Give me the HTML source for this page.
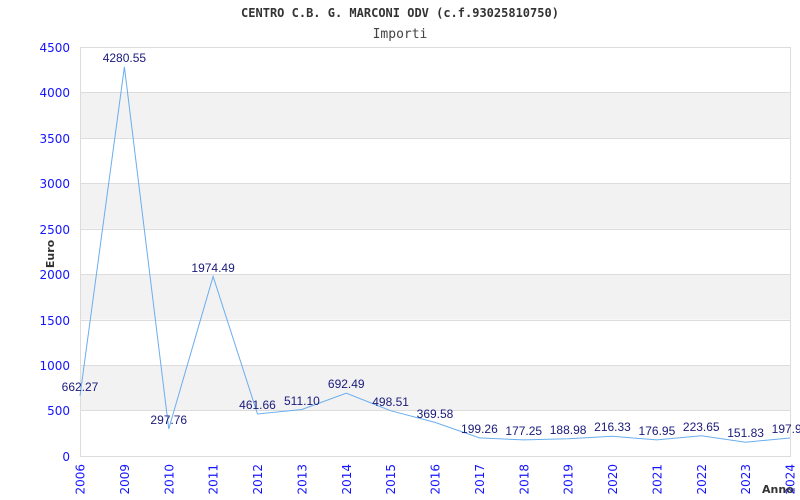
<!DOCTYPE html>
<html><head><meta charset="utf-8"><style>
html,body{margin:0;padding:0;background:#fff;}
svg{display:block}
</style></head><body>
<svg width="800" height="500" xmlns="http://www.w3.org/2000/svg">
<rect width="800" height="500" fill="#fff"/>
<text x="400" y="17" text-anchor="middle" font-family="DejaVu Sans Mono, Liberation Mono, monospace" font-weight="bold" font-size="12" fill="#333">CENTRO C.B. G. MARCONI ODV (c.f.93025810750)</text>
<text x="400" y="38" text-anchor="middle" font-family="DejaVu Sans Mono, Liberation Mono, monospace" font-size="13" fill="#444">Importi</text>
<g fill="#f2f2f2">
<rect x="80" y="92.4" width="710" height="45.4"/>
<rect x="80" y="183.3" width="710" height="45.4"/>
<rect x="80" y="274.1" width="710" height="45.5"/>
<rect x="80" y="365.1" width="710" height="45.4"/>
</g>
<g stroke="#dcdcdc" stroke-width="1">
<line x1="80" y1="47.5" x2="790" y2="47.5"/>
<line x1="80" y1="92.5" x2="790" y2="92.5"/>
<line x1="80" y1="138.5" x2="790" y2="138.5"/>
<line x1="80" y1="183.5" x2="790" y2="183.5"/>
<line x1="80" y1="229.5" x2="790" y2="229.5"/>
<line x1="80" y1="274.5" x2="790" y2="274.5"/>
<line x1="80" y1="320.5" x2="790" y2="320.5"/>
<line x1="80" y1="365.5" x2="790" y2="365.5"/>
<line x1="80" y1="410.5" x2="790" y2="410.5"/>
<line x1="80" y1="456.5" x2="790" y2="456.5"/>
<line x1="80.5" y1="47" x2="80.5" y2="457"/>
<line x1="790.5" y1="47" x2="790.5" y2="457"/>
</g>
<g font-family="DejaVu Sans, sans-serif" font-size="12" fill="#1515ff" text-anchor="end">
<text x="70" y="52">4500</text>
<text x="70" y="97">4000</text>
<text x="70" y="143">3500</text>
<text x="70" y="188">3000</text>
<text x="70" y="234">2500</text>
<text x="70" y="279">2000</text>
<text x="70" y="325">1500</text>
<text x="70" y="370">1000</text>
<text x="70" y="415">500</text>
<text x="70" y="461">0</text>
</g>
<text transform="translate(54,254) rotate(-90)" text-anchor="middle" font-family="DejaVu Sans, sans-serif" font-weight="bold" font-size="11" fill="#333">Euro</text>
<polyline fill="none" stroke="#6aaeee" stroke-width="1" points="80,395.8 124.4,66.9 168.75,428.9 213.1,276.5 257.5,414 301.9,409.5 346.25,393.1 390.6,410.7 435,422.4 479.4,437.9 523.75,439.9 568.1,438.8 612.5,436.3 656.9,439.9 701.25,435.7 745.6,442.2 790,438"/>
<g font-family="Liberation Sans, Arial, sans-serif" font-size="12" fill="#1a1a7a" text-anchor="middle">
<text x="80" y="391">662.27</text>
<text x="124.4" y="62">4280.55</text>
<text x="168.75" y="424">297.76</text>
<text x="213.1" y="272">1974.49</text>
<text x="257.5" y="409">461.66</text>
<text x="301.9" y="405">511.10</text>
<text x="346.25" y="388">692.49</text>
<text x="390.6" y="406">498.51</text>
<text x="435" y="418">369.58</text>
<text x="479.4" y="433">199.26</text>
<text x="523.75" y="435">177.25</text>
<text x="568.1" y="434">188.98</text>
<text x="612.5" y="431">216.33</text>
<text x="656.9" y="435">176.95</text>
<text x="701.25" y="431">223.65</text>
<text x="745.6" y="437">151.83</text>
<text x="790" y="433">197.90</text>
</g>
<g font-family="DejaVu Sans, sans-serif" font-size="12" fill="#1515ff" text-anchor="end">
<text transform="translate(84.5,464) rotate(-90)">2006</text>
<text transform="translate(128.9,464) rotate(-90)">2009</text>
<text transform="translate(173.25,464) rotate(-90)">2010</text>
<text transform="translate(217.6,464) rotate(-90)">2011</text>
<text transform="translate(262,464) rotate(-90)">2012</text>
<text transform="translate(306.4,464) rotate(-90)">2013</text>
<text transform="translate(350.75,464) rotate(-90)">2014</text>
<text transform="translate(395.1,464) rotate(-90)">2015</text>
<text transform="translate(439.5,464) rotate(-90)">2016</text>
<text transform="translate(483.9,464) rotate(-90)">2017</text>
<text transform="translate(528.25,464) rotate(-90)">2018</text>
<text transform="translate(572.6,464) rotate(-90)">2019</text>
<text transform="translate(617,464) rotate(-90)">2020</text>
<text transform="translate(661.4,464) rotate(-90)">2021</text>
<text transform="translate(705.75,464) rotate(-90)">2022</text>
<text transform="translate(750.1,464) rotate(-90)">2023</text>
<text transform="translate(794.5,464) rotate(-90)">2024</text>
</g>
<text x="762" y="493" font-family="DejaVu Sans, sans-serif" font-weight="bold" font-size="11" fill="#333">Anno</text>
</svg>
</body></html>
